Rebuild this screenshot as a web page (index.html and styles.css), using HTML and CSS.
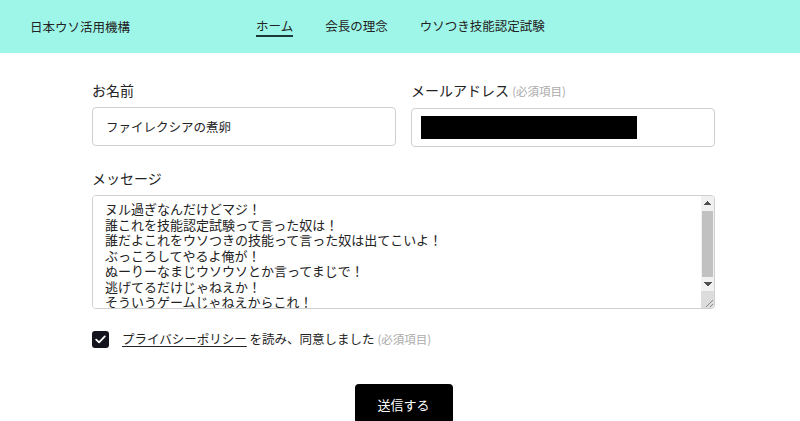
FILE: index.html
```html
<!DOCTYPE html>
<html lang="ja">
<head>
<meta charset="utf-8">
<title>お問い合わせ</title>
<link rel="stylesheet" href="styles.css">
</head>
<body>
<header class="site-header">
  <div class="logo">日本ウソ活用機構</div>
  <nav class="nav">
    <a class="nav-item active" href="#">ホーム</a>
    <a class="nav-item" href="#">会長の理念</a>
    <a class="nav-item" href="#">ウソつき技能認定試験</a>
  </nav>
</header>
<main class="form">
  <div class="row">
    <div class="group">
      <label class="label">お名前</label>
      <input class="field" type="text" value="ファイレクシアの煮卵">
    </div>
    <div class="group">
      <label class="label">メールアドレス <span class="req">(必須項目)</span></label>
      <div class="field field-email"><span class="redact"></span></div>
    </div>
  </div>
  <div class="group group-msg">
    <label class="label">メッセージ</label>
    <div class="area-box">
      <textarea class="area">ヌル過ぎなんだけどマジ！
誰これを技能認定試験って言った奴は！
誰だよこれをウソつきの技能って言った奴は出てこいよ！
ぶっころしてやるよ俺が！
ぬーりーなまじウソウソとか言ってまじで！
逃げてるだけじゃねえか！
そういうゲームじゃねえからこれ！</textarea>
      <div class="sbar">
        <div class="sbtn sbtn-up"></div>
        <div class="sthumb"></div>
        <div class="sbtn sbtn-down"></div>
        <div class="scorner"><svg width="10" height="10" viewBox="0 0 10 10"><path d="M9 2 L2 9 M9 6 L6 9" stroke="#8a8a8a" stroke-width="1" fill="none"/></svg></div>
      </div>
    </div>
  </div>
  <div class="agree">
    <span class="check"><svg width="11" height="9" viewBox="0 0 11 9"><path d="M1.2 4.6 L4.1 7.4 L9.8 1.4" fill="none" stroke="#fff" stroke-width="1.8" stroke-linecap="round" stroke-linejoin="round"/></svg></span>
    <span class="agree-text"><a class="policy" href="#">プライバシーポリシー</a> を読み、同意しました <span class="req">(必須項目)</span></span>
  </div>
  <div class="actions">
    <button class="submit" type="button">送信する</button>
  </div>
</main>
</body>
</html>
```

FILE: styles.css
```css
html, body {
  margin: 0;
  padding: 0;
  background: #fff;
  overflow: hidden;
}
body {
  font-family: "Noto Sans CJK JP", "Noto Sans", sans-serif;
  color: #222;
}
.site-header {
  height: 53px;
  background: #9ef6e8;
  display: flex;
  align-items: center;
  padding-left: 30px;
}
.logo {
  font-size: 12.5px;
  width: 100px;
  color: #222;
}
.nav {
  display: flex;
  gap: 32px;
  margin-left: 126px;
}
.nav-item {
  font-size: 12.5px;
  color: #222;
  text-decoration: none;
  line-height: 18px;
  padding-top: 0;
  border-bottom: 2px solid transparent;
}
.nav-item.active {
  border-bottom-color: #1d3838;
}
.form {
  width: 623px;
  margin-left: 92px;
  padding-top: 27px;
}
.row {
  display: grid;
  grid-template-columns: 304px 304px;
  gap: 15px;
}
.group {
  display: flex;
  flex-direction: column;
  gap: 7px;
}
.group-msg {
  margin-top: 21px;
}
.label {
  font-size: 14px;
  line-height: 20px;
  color: #222;
}
.req {
  font-size: 11.5px;
  color: #aaa;
}
.field {
  box-sizing: border-box;
  height: 39px;
  width: 100%;
  border: 1px solid #cfcfcf;
  border-radius: 4px;
  padding: 0 13px;
  font-family: inherit;
  font-size: 12.5px;
  color: #222;
  background: #fff;
  margin: 0;
}
.field-email {
  display: flex;
  align-items: center;
  padding: 0 0 0 9px;
}
.redact {
  width: 216px;
  height: 23px;
  background: #000;
}
.area-box {
  box-sizing: border-box;
  height: 114px;
  border: 1px solid #cfcfcf;
  border-radius: 4px;
  display: flex;
  align-items: stretch;
  overflow: hidden;
}
.area {
  flex: 1;
  height: 100%;
  box-sizing: border-box;
  border: none;
  outline: none;
  padding: 5px 12px 0 12px;
  font-family: inherit;
  font-size: 13px;
  line-height: 15.5px;
  color: #222;
  margin: 0;
  resize: none;
  overflow: hidden;
  background: #fff;
}
.sbar {
  width: 13px;
  display: flex;
  flex-direction: column;
  background: #f1f1f1;
}
.sbtn {
  height: 15px;
  background-color: #f1f1f1;
  background-repeat: no-repeat;
  background-size: 4px 4px, 4px 4px;
}
.sbtn-up {
  background-image: linear-gradient(to bottom right, transparent 50%, #505050 50%), linear-gradient(to bottom left, transparent 50%, #505050 50%);
  background-position: 2.5px 5px, 6.5px 5px;
}
.sbtn-down {
  height: 14px;
  background-image: linear-gradient(to top right, transparent 50%, #505050 50%), linear-gradient(to top left, transparent 50%, #505050 50%);
  background-position: 2.5px 5px, 6.5px 5px;
}
.sthumb {
  height: 66px;
  background: #c1c1c1;
  margin: 0 1px;
}
.scorner {
  flex: 1;
  background: #dcdcdc;
  display: flex;
  align-items: flex-end;
  justify-content: flex-end;
}
.agree {
  margin-top: 21px;
  display: flex;
  align-items: center;
  gap: 13px;
}
.check {
  width: 17px;
  height: 17px;
  border-radius: 3px;
  background: #14141f;
  display: flex;
  align-items: center;
  justify-content: center;
}
.agree-text {
  font-size: 12.5px;
  line-height: 18px;
  color: #222;
}
.policy {
  color: #222;
  text-decoration: underline;
  text-underline-offset: 2px;
}
.actions {
  display: flex;
  justify-content: center;
  margin-top: 36px;
}
.submit {
  width: 98px;
  height: 40px;
  background: #000;
  color: #fff;
  border: none;
  border-radius: 4px;
  font-family: inherit;
  font-size: 13px;
  padding: 0;
}
```
